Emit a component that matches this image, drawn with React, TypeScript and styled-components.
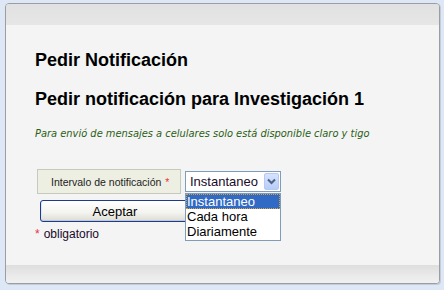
import React from 'react';
import styled, { createGlobalStyle } from 'styled-components';

const GlobalStyle = createGlobalStyle`
  html, body {
    margin: 0;
    padding: 0;
    background: #dde7f5;
    font-family: "Liberation Sans", Arial, sans-serif;
  }
`;

const Page = styled.div`
  width: 444px;
  height: 290px;
  padding: 3px 4px 0 5px;
  box-sizing: border-box;
`;

const Panel = styled.div`
  width: 435px;
  border: 1px solid #9a9ea3;
  border-radius: 4px;
  background: #f4f4f4;
  overflow: hidden;
  box-sizing: border-box;
  box-shadow: 1px 1px 0 #c4ccd6;
`;

const PanelHeader = styled.div`
  height: 21px;
  background: linear-gradient(#e1e1e1, #e6e6e6);
`;

const PanelFooter = styled.div`
  height: 18px;
  background: linear-gradient(#dedede, #ececec 70%, #f0f0f0);
`;

const PanelBody = styled.div`
  display: flex;
  flex-direction: column;
  align-items: flex-start;
  height: 240px;
  padding: 24px 0 0 29px;
  box-sizing: border-box;
`;

const Title = styled.h1<{ $gap?: number }>`
  margin: ${p => p.$gap ?? 0}px 0 0;
  font-size: 18px;
  line-height: 22px;
  font-weight: bold;
  color: #000;
`;

const Note = styled.p`
  margin: 18px 0 0;
  font-family: "DejaVu Sans", Verdana, sans-serif;
  font-size: 9.9px;
  line-height: 12px;
  font-style: italic;
  color: #2b5f14;
`;

const FormRow = styled.div`
  display: flex;
  align-items: center;
  gap: 4px;
  margin: 29px 0 0 2px;
`;

const FieldLabel = styled.div`
  display: flex;
  align-items: center;
  width: 144px;
  height: 25px;
  padding-left: 13px;
  box-sizing: border-box;
  background: #edefe2;
  border: 1px solid #c6cabd;
  font-size: 10.5px;
  color: #222;
`;

const Required = styled.span`
  color: #e8323c;
  margin-left: 4px;
`;

const SelectWrap = styled.div`
  position: relative;
`;

const SelectBox = styled.div`
  display: flex;
  align-items: center;
  justify-content: space-between;
  width: 96px;
  height: 21px;
  padding: 0 1px 0 4px;
  box-sizing: border-box;
  background: #fff;
  border: 1px solid #7f9db9;
  font-size: 13px;
  color: #1a0a2a;
`;

const DropButton = styled.div`
  display: flex;
  align-items: center;
  justify-content: center;
  width: 15px;
  height: 17px;
  border-radius: 2px;
  background: linear-gradient(#d6e3fd, #b8cdf8);
  border: 1px solid #b6c9f2;
  box-sizing: border-box;
`;

const OptionList = styled.div`
  position: absolute;
  top: 100%;
  left: 0;
  margin-top: 1px;
  width: 96px;
  padding-bottom: 1px;
  background: #fff;
  border: 1px solid #7f9db9;
  box-sizing: border-box;
  z-index: 2;
`;

const OptionItem = styled.div<{ $active?: boolean }>`
  height: 15px;
  line-height: 15px;
  padding-left: 1px;
  font-size: 13px;
  color: ${p => (p.$active ? '#fff' : '#000')};
  background: ${p => (p.$active ? '#316ac5' : 'transparent')};
  outline: ${p => (p.$active ? '1px dotted #d6a23a' : 'none')};
  outline-offset: -1px;
`;

const SubmitButton = styled.button`
  width: 150px;
  height: 22px;
  margin: 6px 0 0 5px;
  padding: 0;
  font-family: "Liberation Sans", Arial, sans-serif;
  font-size: 13px;
  color: #000;
  border: 1px solid #1b3c8c;
  border-radius: 3px;
  background: linear-gradient(#ffffff, #f3f3ef 60%, #dcdcd2);
  box-shadow: inset 0 -1px 0 #c2c8d8, inset 1px 0 0 #dfe7f7;
`;

const RequiredNote = styled.div`
  margin-top: 5px;
  font-size: 12px;
  line-height: 14px;
  color: #1a0a2a;
`;

const Star = styled.span`
  color: #e8323c;
  margin-right: 4px;
`;

const options = ['Instantaneo', 'Cada hora', 'Diariamente'];

function Chevron(): JSX.Element {
  return (
    <svg width="9" height="7" viewBox="0 0 9 7">
      <path d="M1 1.5 L4.5 5 L8 1.5" fill="none" stroke="#4d6185" strokeWidth="2" />
    </svg>
  );
}

export default function App(): JSX.Element {
  return (
    <Page>
      <GlobalStyle />
      <Panel>
        <PanelHeader />
        <PanelBody>
          <Title>Pedir Notificación</Title>
          <Title $gap={17}>Pedir notificación para Investigación 1</Title>
          <Note>Para envió de mensajes a celulares solo está disponible claro y tigo</Note>
          <FormRow>
            <FieldLabel>
              Intervalo de notificación<Required>*</Required>
            </FieldLabel>
            <SelectWrap>
              <SelectBox>
                Instantaneo
                <DropButton>
                  <Chevron />
                </DropButton>
              </SelectBox>
              <OptionList>
                {options.map((opt, i) => (
                  <OptionItem key={opt} $active={i === 0}>
                    {opt}
                  </OptionItem>
                ))}
              </OptionList>
            </SelectWrap>
          </FormRow>
          <SubmitButton>Aceptar</SubmitButton>
          <RequiredNote>
            <Star>*</Star>obligatorio
          </RequiredNote>
        </PanelBody>
        <PanelFooter />
      </Panel>
    </Page>
  );
}
